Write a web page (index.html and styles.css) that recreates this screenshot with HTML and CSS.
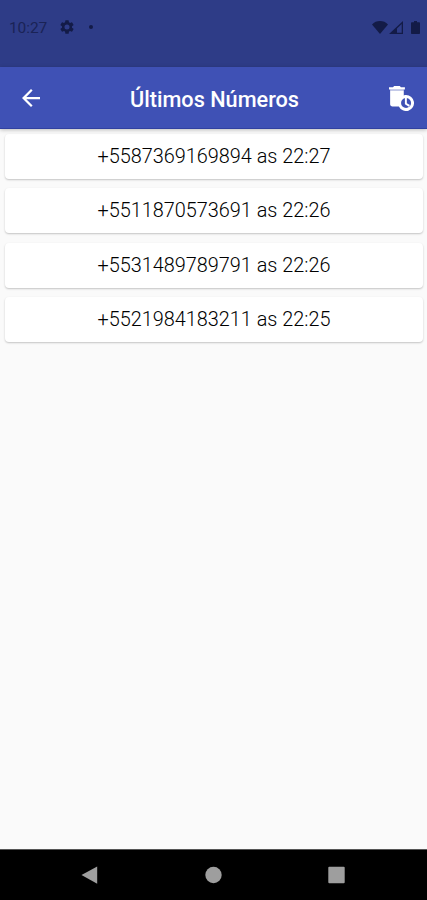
FILE: index.html
```html
<!DOCTYPE html>
<html lang="pt-BR">
<head>
<meta charset="utf-8">
<title>Últimos Números</title>
<link rel="stylesheet" href="styles.css">
</head>
<body>
<div class="screen">
  <div class="status">
    <span class="time">10:27</span>
    <svg class="gear" viewBox="2 2 20 20"><path d="M19.14 12.94c.04-.3.06-.61.06-.94s-.02-.64-.07-.94l2.03-1.58a.49.49 0 0 0 .12-.61l-1.92-3.32a.49.49 0 0 0-.59-.22l-2.39.96a7 7 0 0 0-1.62-.94l-.36-2.54a.48.48 0 0 0-.48-.41h-3.84a.48.48 0 0 0-.47.41l-.36 2.54a7 7 0 0 0-1.62.94l-2.39-.96a.48.48 0 0 0-.59.22L2.74 8.87a.48.48 0 0 0 .12.61l2.03 1.58a6 6 0 0 0 0 1.88l-2.03 1.58a.49.49 0 0 0-.12.61l1.92 3.32c.12.22.37.29.59.22l2.39-.96c.5.38 1.03.7 1.62.94l.36 2.54c.05.24.24.41.48.41h3.84c.24 0 .44-.17.47-.41l.36-2.54a7 7 0 0 0 1.62-.94l2.39.96c.22.08.47 0 .59-.22l1.92-3.32a.48.48 0 0 0-.12-.61zM12 15.6a3.6 3.6 0 1 1 0-7.2 3.6 3.6 0 0 1 0 7.2z"/></svg>
    <span class="dot"></span>
    <span class="spacer"></span>
    <svg class="wifi" viewBox="0 0 16 13"><path d="M8 13 0 3.4C2 1.2 5 0 8 0s6 1.2 8 3.4z"/></svg>
    <svg class="signal" viewBox="0 0 14 13"><path fill-rule="evenodd" d="M14 0v13H0zM12.7 3 8 7.5v4.2h4.7z"/></svg>
    <svg class="battery" viewBox="0 0 9 13"><path d="M3 0h3v1.3h2.2q.8 0 .8.8v10.1q0 .8-.8.8H.8q-.8 0-.8-.8V2.1q0-.8.8-.8H3z"/></svg>
  </div>
  <header class="bar">
    <svg class="back" viewBox="4 4 16 16"><path d="M20 11H7.83l5.59-5.59L12 4l-8 8 8 8 1.41-1.41L7.83 13H20z"/></svg>
    <h1>Últimos Números</h1>
    <svg class="trash" viewBox="1 1 22 22"><path class="lid-gap" d="M2 4h12v1H2z"/><path d="M15 2h-3.5l-1-1h-5l-1 1H1v2h14zM16 9c-.7 0-1.37.1-2 .29V5H2v12c0 1.1.9 2 2 2h5.68A7 7 0 1 0 16 9zm0 11.4a4.4 4.4 0 1 1 0-8.8 4.4 4.4 0 0 1 0 8.8zM16.7 11.4H15v5.6l3.5 2.2.9-1.4-2.7-1.6z"/></svg>
  </header>
  <main class="list">
    <div class="card">+5587369169894 as 22:27</div>
    <div class="card">+5511870573691 as 22:26</div>
    <div class="card">+5531489789791 as 22:26</div>
    <div class="card">+5521984183211 as 22:25</div>
  </main>
  <nav class="nav">
    <svg viewBox="0 0 17 18"><path d="M0.5 9 16.2.5v17.2z"/></svg>
    <svg viewBox="0 0 17 18"><circle cx="8.5" cy="9" r="8.2"/></svg>
    <svg viewBox="0 0 17 18"><rect x=".3" y=".8" width="16.4" height="16.4" rx="1"/></svg>
  </nav>
</div>
</body>
</html>
```
FILE: styles.css
```css
* { box-sizing: border-box; }
body { margin: 0; font-family: Roboto, sans-serif; }
svg { display: block; flex: none; }
.screen {
  width: 427px;
  height: 900px;
  display: flex;
  flex-direction: column;
  background: #fafafa;
}
.status {
  height: 67px;
  flex: none;
  display: flex;
  align-items: flex-start;
  padding: 21px 7px 0 9px;
  background: #2e3c87;
  color: #1a2356;
  fill: #131b47;
}
.time { width: 51px; font-size: 15.5px; line-height: 14px; letter-spacing: -0.1px; }
.gear { width: 14px; height: 14px; margin-top: -1px; }
.dot { width: 4px; height: 4px; margin: 4px 0 0 15px; border-radius: 50%; background: #131b47; }
.spacer { flex: 1; }
.wifi { width: 16px; height: 13px; }
.signal { width: 14px; height: 13px; margin-left: 1px; }
.battery { width: 9px; height: 13px; margin-left: 8px; }
.bar {
  height: 62px;
  flex: none;
  display: flex;
  align-items: center;
  justify-content: space-between;
  padding: 1px 13px 0 22px;
  position: relative;
  background: #3f51b5;
  border-bottom: 1px solid #3141a0;
  box-shadow: 0 1px 4px rgba(0, 0, 0, 0.25);
  fill: #fff;
}
.back { width: 18px; height: 18px; }
.bar h1 {
  margin: 3px 0 0;
  font-size: 21.7px;
  line-height: 28px;
  font-weight: 500;
  color: #fff;
}
.trash { width: 25px; height: 25px; }
.lid-gap { fill: #c5cae9; }
.list {
  flex: 1;
  display: flex;
  flex-direction: column;
  gap: 9.5px;
  padding: 4.5px 4px 0 5px;
}
.card {
  height: 45px;
  flex: none;
  border-radius: 4px;
  background: #fff;
  box-shadow: 0 1px 2px rgba(0, 0, 0, 0.22);
  text-align: center;
  font-size: 19.85px;
  line-height: 46px;
  font-weight: 300;
  color: #000;
}
.nav {
  height: 51px;
  flex: none;
  display: flex;
  align-items: center;
  justify-content: space-between;
  padding: 0 82px 0 81px;
  background: #000;
  border-top: 1px solid #555;
  fill: #9e9e9e;
}
.nav svg { width: 17px; height: 18px; }
```
